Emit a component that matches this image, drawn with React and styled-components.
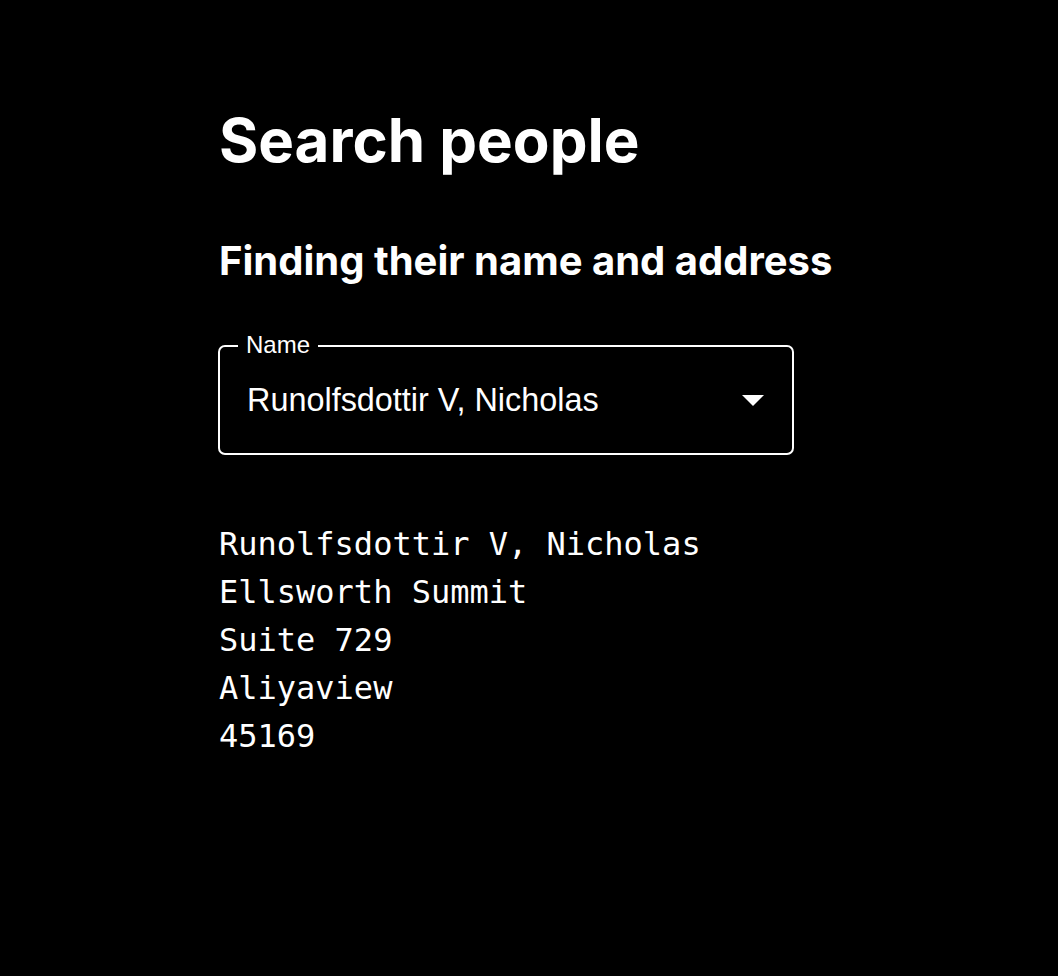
import React from 'react';
import styled, { createGlobalStyle } from 'styled-components';

const GlobalStyle = createGlobalStyle`
  html, body {
    margin: 0;
    padding: 0;
    background: #000;
    color: #fff;
  }
`;

const Page = styled.main`
  min-height: 976px;
  background: #000;
  padding-top: 104px;
  box-sizing: border-box;
`;

const Container = styled.div`
  max-width: 620px;
  margin: 0 auto;
  display: flex;
  flex-direction: column;
`;

const Title = styled.h1`
  margin: 0;
  font-family: Inter, "Liberation Sans", sans-serif;
  font-weight: 700;
  font-size: 60px;
  line-height: 1.2;
`;

const Subtitle = styled.h2`
  margin: 61px 0 0;
  font-family: Inter, "Liberation Sans", sans-serif;
  font-weight: 700;
  font-size: 40px;
  line-height: 48px;
`;

const SelectBox = styled.div`
  position: relative;
  margin: 60px 0 0 -1px;
  width: 576px;
  height: 110px;
  box-sizing: border-box;
  border: 2px solid #fff;
  border-radius: 7px;
  display: flex;
  align-items: center;
  justify-content: space-between;
  padding: 0 28px 0 27px;
  font-family: "Liberation Sans", Arial, sans-serif;
  cursor: pointer;
`;

const Label = styled.span`
  position: absolute;
  top: -16px;
  left: 18px;
  padding: 0 8px;
  background: #000;
  font-size: 24px;
  line-height: 28px;
`;

const Value = styled.span`
  font-size: 32.4px;
  line-height: 1;
`;

const Arrow = () => (
  <svg width="22" height="11" viewBox="7 10 10 5" fill="#fff">
    <path d="M7 10l5 5 5-5z" />
  </svg>
);

const Address = styled.pre`
  margin: 65px 0 0;
  font-family: "DejaVu Sans Mono", "Liberation Mono", monospace;
  font-size: 32px;
  line-height: 48px;
`;

const person = {
  name: 'Runolfsdottir V, Nicholas',
  lines: ['Ellsworth Summit', 'Suite 729', 'Aliyaview', '45169'],
};

const App = () => {
  return (
    <Page>
      <GlobalStyle />
      <Container>
        <Title>Search people</Title>
        <Subtitle>Finding their name and address</Subtitle>
        <SelectBox>
          <Label>Name</Label>
          <Value>{person.name}</Value>
          <Arrow />
        </SelectBox>
        <Address>{[person.name, ...person.lines].join('\n')}</Address>
      </Container>
    </Page>
  );
};

export default App;
